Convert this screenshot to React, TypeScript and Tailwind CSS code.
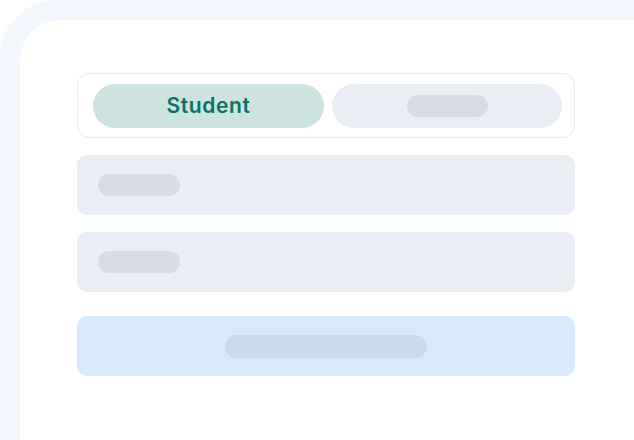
export default function App() {
    return (
        <div className="w-[634px] h-[440px] overflow-hidden bg-white font-['Inter',sans-serif]">
            <div className="w-full h-full rounded-tl-[56px] bg-[#f3f8fe] pt-5 pl-5">
                <div className="w-full h-full rounded-tl-[40px] bg-white pt-[53px] pl-[57px]">
                    <div className="w-[498px] flex flex-col">
                        <div className="h-[65px] rounded-xl border border-[#e8ebef] pl-[15px] flex items-center gap-2">
                            <div className="w-[231px] h-11 rounded-full bg-[#cce3e0] flex items-center justify-center text-[21px] font-semibold tracking-[0.6px] text-[#0e7166]">
                                Student
                            </div>
                            <div className="w-[230px] h-11 rounded-full bg-[#eaeef4] flex items-center justify-center">
                                <div className="w-[81px] h-[22px] rounded-full bg-[#d8dde4]" />
                            </div>
                        </div>

                        <div className="mt-[17px] h-[60px] rounded-[10px] bg-[#e9edf4] px-[21px] flex items-center">
                            <div className="w-[82px] h-[22px] rounded-full bg-[#d8dde4]" />
                        </div>

                        <div className="mt-[17px] h-[60px] rounded-[10px] bg-[#e9edf4] px-[21px] flex items-center">
                            <div className="w-[82px] h-[22px] rounded-full bg-[#d8dde4]" />
                        </div>

                        <div className="mt-6 h-[60px] rounded-[10px] bg-[#d7e9fb] flex items-center justify-center">
                            <div className="w-[202px] h-[23px] rounded-full bg-[#cadcec]" />
                        </div>
                    </div>
                </div>
            </div>
        </div>
    );
}
